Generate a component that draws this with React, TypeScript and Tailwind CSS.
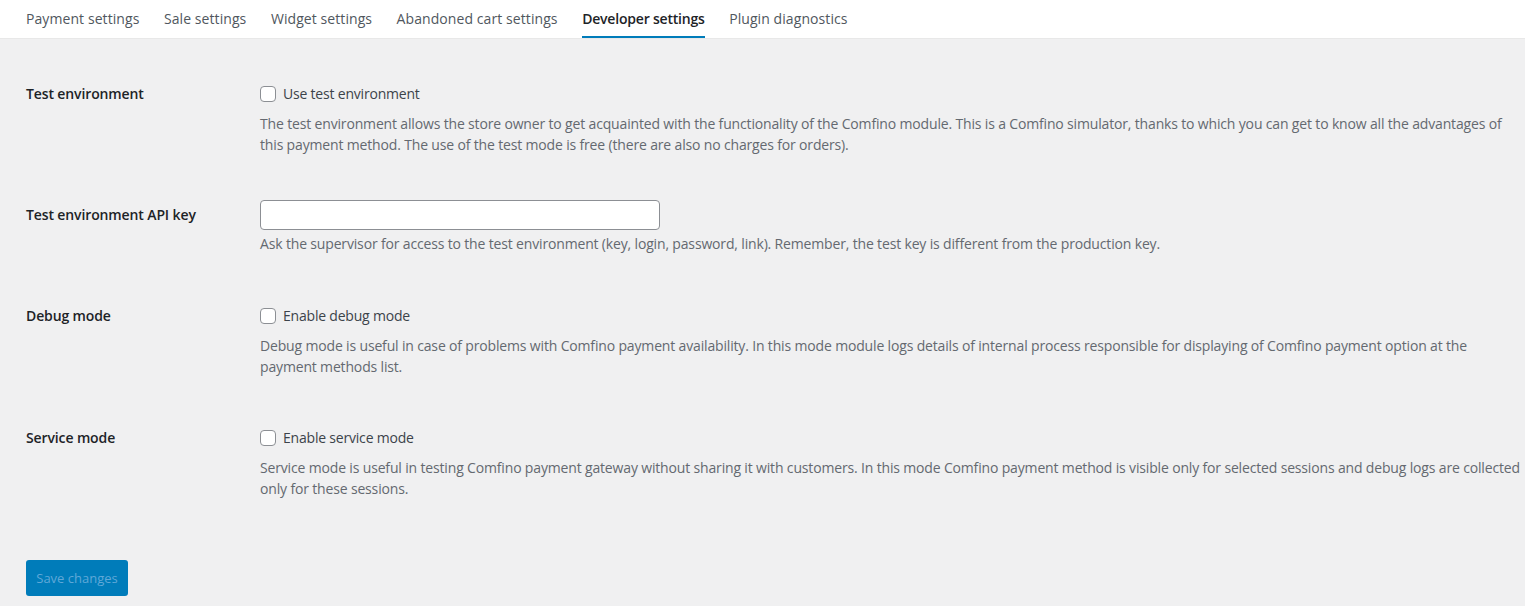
import React from "react";

const tabs = [
  "Payment settings",
  "Sale settings",
  "Widget settings",
  "Abandoned cart settings",
  "Developer settings",
  "Plugin diagnostics",
];

function Checkbox({ label }: { label: string }) {
  return (
    <label className="flex items-center h-[21px] gap-[7px] text-[#3c434a] tracking-[-0.2px]">
      <span className="w-4 h-4 rounded-[4px] border border-[#8c8f94] bg-white shrink-0" />
      <span>{label}</span>
    </label>
  );
}

function Row({
  label,
  children,
  className = "",
  labelClass = "",
}: {
  label: string;
  children: React.ReactNode;
  className?: string;
  labelClass?: string;
}) {
  return (
    <div className={`flex ${className}`}>
      <div
        className={`w-[234px] shrink-0 font-semibold text-[#1d2327] leading-[21px] tracking-[-0.12px] ${labelClass}`}
      >
        {label}
      </div>
      <div className="flex-1 min-w-0">{children}</div>
    </div>
  );
}

function Desc({ children, className = "" }: { children: React.ReactNode; className?: string }) {
  return <p className={`text-[#646970] tracking-[-0.16px] ${className}`}>{children}</p>;
}

export default function App() {
  return (
    <div
      className="min-h-[606px] bg-[#f0f0f1] text-[14px] leading-[21px]"
      style={{ fontFamily: '"Open Sans", "Noto Sans", sans-serif' }}
    >
      <div className="bg-white h-[39px] flex gap-[24.5px] px-[26px] border-b border-[#e8e8e8]">
        {tabs.map((t) => {
          const active = t === "Developer settings";
          return (
            <div
              key={t}
              className={`flex items-center h-full border-b-2 ${
                active
                  ? "border-[#007cba] text-[#1d2327] font-semibold tracking-[-0.2px]"
                  : "border-transparent text-[#50575e] font-medium tracking-[0.08px]"
              }`}
            >
              {t}
            </div>
          );
        })}
      </div>

      <div className="pl-[26px] pr-[5px] pt-[44px] pb-[10px]">
        <Row label="Test environment">
          <Checkbox label="Use test environment" />
          <Desc className="mt-[9px]">
            The test environment allows the store owner to get acquainted with the functionality of the Comfino module. This is a Comfino simulator, thanks to which you can get to know all the advantages of this payment method. The use of the test mode is free (there are also no charges for orders).
          </Desc>
        </Row>

        <Row label="Test environment API key" className="mt-[45px]" labelClass="pt-[4px]">
          <input
            type="text"
            className="block w-[400px] h-[30px] rounded-[4px] border border-[#8c8f94] bg-white px-2 outline-none"
          />
          <Desc className="mt-[3px]">
            Ask the supervisor for access to the test environment (key, login, password, link). Remember, the test key is different from the production key.
          </Desc>
        </Row>

        <Row label="Debug mode" className="mt-[51px]">
          <Checkbox label="Enable debug mode" />
          <Desc className="mt-[9px]">
            Debug mode is useful in case of problems with Comfino payment availability. In this mode module logs details of internal process responsible for displaying of Comfino payment option at the payment methods list.
          </Desc>
        </Row>

        <Row label="Service mode" className="mt-[50px]">
          <Checkbox label="Enable service mode" />
          <Desc className="mt-[9px]">
            Service mode is useful in testing Comfino payment gateway without sharing it with customers. In this mode Comfino payment method is visible only for selected sessions and debug logs are collected only for these sessions.
          </Desc>
        </Row>

        <button
          type="button"
          className="mt-[61px] block w-[102px] h-[36px] rounded-[3px] bg-[#007cba] text-[13px] text-[#5fa8d8]"
        >
          Save changes
        </button>
      </div>
    </div>
  );
}
